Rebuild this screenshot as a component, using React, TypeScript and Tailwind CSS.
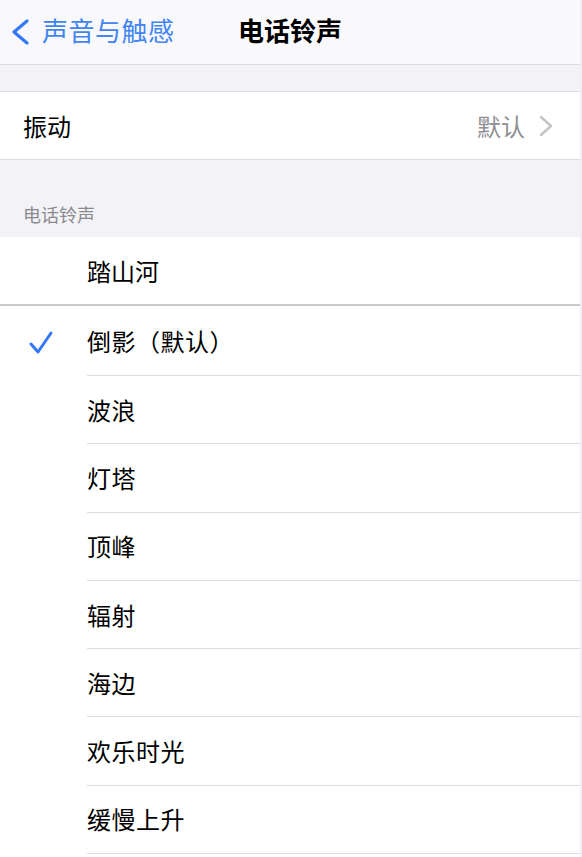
import React from "react";

const FONT = { fontFamily: '"Noto Sans CJK SC", "Noto Sans", sans-serif' };

const tones = ["倒影（默认）", "波浪", "灯塔", "顶峰", "辐射", "海边", "欢乐时光", "缓慢上升"];

export default function App() {
  return (
    <div className="w-[582px] h-[857px] overflow-hidden flex bg-[#efeff4]" style={FONT}>
      <div className="w-[580px] shrink-0 flex flex-col bg-[#f2f2f7]">
        {/* Nav bar */}
        <div className="h-[65px] shrink-0 bg-[#f9f9fb] border-b border-[#dcdce0] grid grid-cols-[1fr_auto_1fr] items-center pb-[4px]">
          <div className="flex items-center pl-[11px] gap-[13px] text-[#3a7ff2]">
            <svg width="18" height="28" viewBox="0 0 18 28" className="mt-[4px]">
              <polyline points="16,3 3,14 16,25" fill="none" stroke="#3478f6" strokeWidth="3.2" strokeLinecap="round" strokeLinejoin="round" />
            </svg>
            <span className="text-[26px] leading-[32px] text-[#4185f4] tracking-[0.5px]">声音与触感</span>
          </div>
          <div className="text-[26px] leading-[32px] font-semibold text-black">电话铃声</div>
          <div />
        </div>

        {/* gap */}
        <div className="h-[27px] shrink-0 border-b border-[#dedee2]" />

        {/* vibration row */}
        <div className="h-[68px] shrink-0 bg-white border-b border-[#dedee2] flex items-center pl-[23px] pr-[27px]">
          <span className="text-[24px] leading-[30px] text-black">振动</span>
          <span className="ml-auto text-[24px] leading-[30px] text-[#8e8e93]">默认</span>
          <svg width="14" height="22" viewBox="0 0 14 22" className="ml-[14px]">
            <polyline points="2,2 12,11 2,20" fill="none" stroke="#c4c4c8" strokeWidth="2.4" strokeLinecap="round" strokeLinejoin="round" />
          </svg>
        </div>

        {/* section header */}
        <div className="h-[77px] shrink-0 flex items-end pl-[23px] pb-[11px]">
          <span className="text-[18px] leading-[24px] text-[#8a8a8e]">电话铃声</span>
        </div>

        {/* 踏山河 */}
        <div className="h-[69px] shrink-0 bg-white border-b-2 border-[#c8c8cb] flex items-center pl-[87px]">
          <span className="text-[24px] leading-[30px] text-black">踏山河</span>
        </div>

        {/* list */}
        <div className="flex-1 bg-white flex flex-col pt-[1.7px]">
          {tones.map((t, i) => (
            <div key={t} className="h-[68.3px] shrink-0 flex">
              <div className="w-[87px] shrink-0 flex items-center justify-center pr-[10px]">
                {i === 0 && (
                  <svg width="26" height="26" viewBox="0 0 26 26" className="mt-[2px] ml-[4px]">
                    <polyline points="3,14 10,22 23,3" fill="none" stroke="#3478f6" strokeWidth="3" strokeLinecap="round" strokeLinejoin="round" />
                  </svg>
                )}
              </div>
              <div className="flex-1 flex items-center border-b border-[#dcdce0]">
                <span className="text-[24px] leading-[30px] text-black tracking-[0.5px]">{t}</span>
              </div>
            </div>
          ))}
        </div>
      </div>
    </div>
  );
}
